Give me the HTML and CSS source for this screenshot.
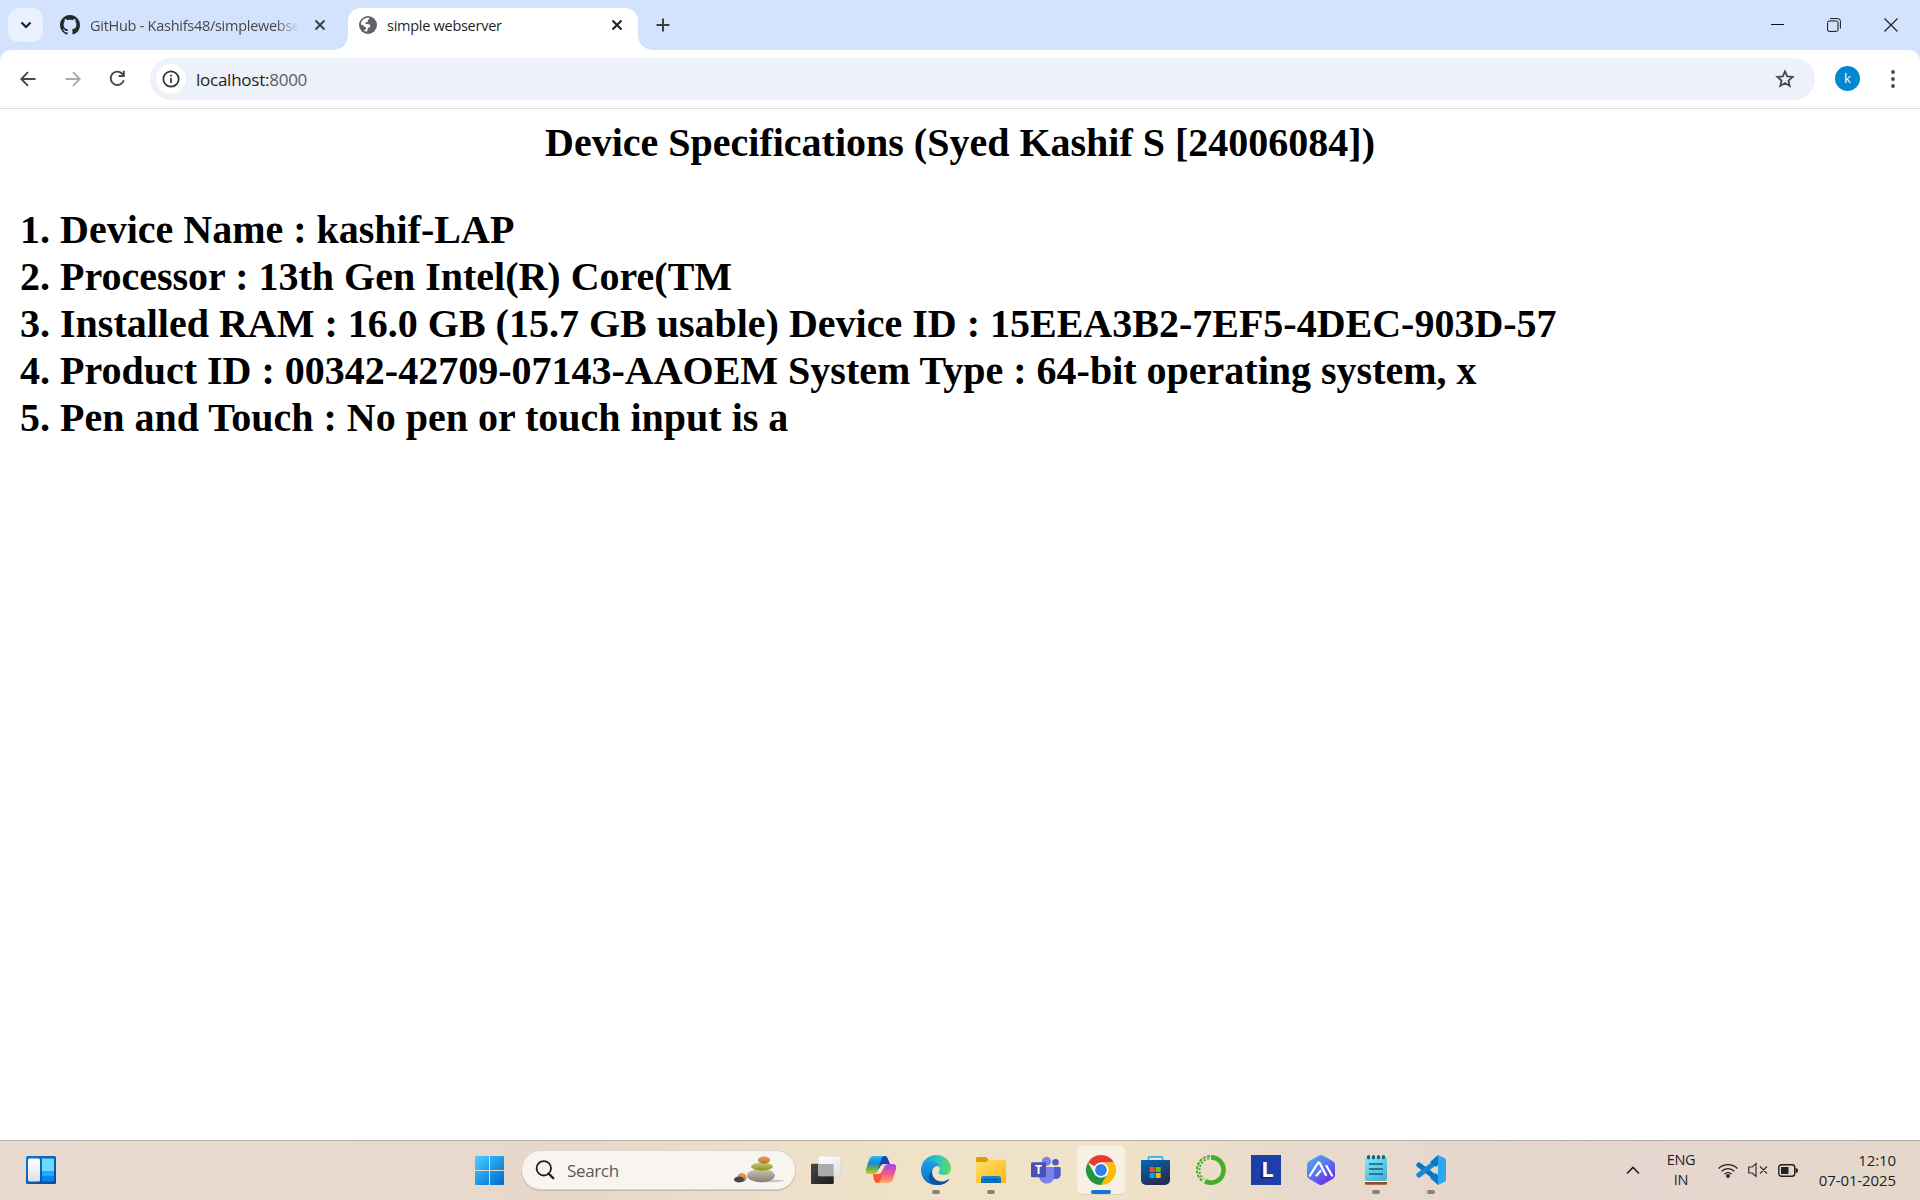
FILE: index.html
```html
<!DOCTYPE html>
<html lang="en">
<head>
<meta charset="utf-8">
<title>simple webserver</title>
<link rel="stylesheet" href="styles.css">
</head>
<body>
<div class="screen">
  <header class="tabstrip">
    <button class="tab-search" aria-label="Search tabs"><svg width="12" height="8" viewBox="0 0 12 8"><path d="M1.5 1.5 6 6l4.500-4.500" fill="none" stroke="#1f1f1f" stroke-width="2.200"/></svg></button>
    <div class="tab">
      <svg class="favicon" width="20" height="20" viewBox="0 0 16 16"><path fill="#24292f" d="M8 0C3.580 0 0 3.580 0 8c0 3.540 2.290 6.530 5.470 7.590.4.070.550-.170.550-.380 0-.190-.010-.820-.010-1.490-2.010.370-2.530-.490-2.690-.940-.090-.230-.480-.940-.820-1.130-.280-.150-.680-.520-.010-.530.630-.010 1.080.580 1.230.820.720 1.210 1.870.870 2.330.660.070-.520.280-.870.510-1.070-1.780-.2-3.640-.890-3.640-3.950 0-.870.310-1.590.820-2.150-.080-.2-.360-1.020.080-2.120 0 0 .670-.210 2.200.820.640-.180 1.320-.270 2-.270s1.360.090 2 .270c1.530-1.040 2.200-.820 2.200-.820.440 1.100.160 1.920.080 2.120.510.560.820 1.270.820 2.150 0 3.070-1.870 3.750-3.650 3.950.290.250.540.730.540 1.480 0 1.070-.010 1.930-.010 2.200 0 .210.150.460.550.380A8.010 8.010 0 0 0 16 8c0-4.420-3.580-8-8-8z"/></svg>
      <span class="tab-title fade">GitHub - Kashifs48/simplewebse</span>
      <svg class="close" width="12" height="12" viewBox="0 0 12 12"><path d="m1.500 1.500 9 9m0-9-9 9" stroke="#3c4043" stroke-width="1.900"/></svg>
    </div>
    <div class="tab active">
      <svg class="favicon" width="18" height="18" viewBox="0 0 18 18"><circle cx="9" cy="9" r="9" fill="#5f6368"/><path fill="#fff" d="M1.900 8.400C2 5 4.700 2.100 8.300 1.800h1.900c.5 1.500-.8 1.700-1.300 2.300-.4.600.2 1.400-.4 1.900-.6.500-1.600 0-2.100.6-.4.600.1 1.300.8 1.400 1.300.2 3.400-.2 4 1.200.6 1.500-.8 2.100-1.900 2.600-1 .6-.2 2.300-1.400 3.600-1 .2-2.300-.2-3.200-.9.900-.8 2.400-.7 2.400-2 0-1.700-1.400-1.500-2.300-2.400C3.900 9.200 3.300 8.500 1.900 8.400z"/></svg>
      <span class="tab-title">simple webserver</span>
      <svg class="close" width="12" height="12" viewBox="0 0 12 12"><path d="m1.500 1.500 9 9m0-9-9 9" stroke="#1f1f1f" stroke-width="2"/></svg>
    </div>
    <svg class="newtab" width="14" height="14" viewBox="0 0 14 14"><path d="M7 .5v13M.5 7h13" stroke="#3c4043" stroke-width="2"/></svg>
    <div class="window-controls">
      <svg width="13" height="13" viewBox="0 0 13 13"><path d="M0 6.500h13" stroke="#111" stroke-width="1"/></svg>
      <svg width="14" height="14" viewBox="0 0 14 14" fill="none" stroke="#111"><rect x=".6" y="3" width="10.400" height="10.400" rx="1.500"/><path d="M3.200.6h7.500a2.700 2.700 0 0 1 2.700 2.700v7.200"/></svg>
      <svg width="14" height="14" viewBox="0 0 14 14"><path d="m.5.5 13 13m0-13-13 13" stroke="#222" stroke-width="1.200"/></svg>
    </div>
  </header>

  <div class="toolbar-bg">
  <nav class="toolbar">
    <svg class="nav-back" width="16" height="16" viewBox="0 0 16 16" fill="none" stroke="#474747" stroke-width="1.900"><path d="M15.500 8H2M8 1.200 1.300 8 8 14.800"/></svg>
    <svg class="nav-forward" width="16" height="16" viewBox="0 0 16 16" fill="none" stroke="#ababab" stroke-width="1.900"><path d="M.5 8H14M8 1.200 14.700 8 8 14.800"/></svg>
    <svg class="nav-reload" width="17" height="17" viewBox="0 0 17 17"><path d="M14.800 10.200A6.700 6.700 0 1 1 13 3.500l1.600 1.700" fill="none" stroke="#474747" stroke-width="1.900"/><path d="M15.800.8v6.100H9.700V5h4.200V.8z" fill="#474747"/></svg>
    <div class="omnibox">
      <span class="site-info"><svg width="18" height="18" viewBox="0 0 18 18"><circle cx="9" cy="9" r="7.700" fill="none" stroke="#303030" stroke-width="1.700"/><path d="M9 8v5M9 4.800v1.700" stroke="#303030" stroke-width="1.700"/></svg></span>
      <span class="url">localhost:<span class="port">8000</span></span>
      <svg class="star" width="20" height="20" viewBox="0 0 20 20"><path d="m10 2.400 2.200 5 5.400.5-4.100 3.600 1.200 5.400L10 14l-4.700 2.900 1.200-5.400-4.100-3.600 5.400-.5z" fill="none" stroke="#474747" stroke-width="1.800"/></svg>
    </div>
    <span class="avatar">k</span>
    <svg class="menu" width="4" height="18" viewBox="0 0 4 18" fill="#474747"><circle cx="2" cy="2" r="1.900"/><circle cx="2" cy="9" r="1.900"/><circle cx="2" cy="16" r="1.900"/></svg>
  </nav>
  </div>

  <main class="page">
    <h1 class="heading">Device Specifications (Syed Kashif S [24006084])</h1>
    <div class="specs">
      <div>1. Device Name : kashif-LAP</div>
      <div>2. Processor : 13th Gen Intel(R) Core(TM</div>
      <div>3. Installed RAM : 16.0 GB (15.7 GB usable) Device ID : 15EEA3B2-7EF5-4DEC-903D-57</div>
      <div>4. Product ID : 00342-42709-07143-AAOEM System Type : 64-bit operating system, x</div>
      <div>5. Pen and Touch : No pen or touch input is a</div>
    </div>
  </main>

  <footer class="taskbar">
    <svg class="widgets" width="30" height="28" viewBox="0 0 30 28"><defs><linearGradient id="wd" x2="1" y2="1"><stop stop-color="#0f77d0"/><stop offset="1" stop-color="#064a96"/></linearGradient><linearGradient id="wp" x2="0" y2="1"><stop stop-color="#fff"/><stop offset="1" stop-color="#dfe0e3"/></linearGradient></defs><rect width="30" height="28" rx="1.500" fill="url(#wd)"/><rect x="2" y="2.500" width="12" height="23" rx="1.500" fill="url(#wp)"/><path fill="#69daff" d="M16 2.500h12V15H16z"/><path fill="#21a8ff" d="M16 15h12v5H16z"/><path fill="#0684ef" d="M16 20h12v5.500H16z"/></svg>

    <div class="apps">
      <svg class="start" width="48" height="48" viewBox="0 0 48 48"><defs><linearGradient id="st" gradientUnits="userSpaceOnUse" x1="10" y1="10" x2="39" y2="39"><stop stop-color="#4fd0ff"/><stop offset=".5" stop-color="#1b9be8"/><stop offset="1" stop-color="#0269d0"/></linearGradient></defs><path fill="url(#st)" d="M11 10h13v14H10V11a1 1 0 0 1 1-1zM25 10h13a1 1 0 0 1 1 1v13H25zM10 25h14v14H11a1 1 0 0 1-1-1zM25 25h14v13a1 1 0 0 1-1 1H25z"/></svg>
      <div class="search">
        <svg width="20" height="20" viewBox="0 0 20 20"><circle cx="8.800" cy="8.300" r="7.200" fill="none" stroke="#222" stroke-width="1.800"/><path d="m13.500 13.500 4.700 4.700" stroke="#222" stroke-width="2.400" stroke-linecap="round"/></svg>
        <span class="search-label">Search</span>
        <svg class="stones" width="52" height="30" viewBox="0 0 52 30"><defs><linearGradient id="s1" x2="0" y2="1"><stop stop-color="#cfc8bb"/><stop offset="1" stop-color="#857d72"/></linearGradient><linearGradient id="s2" x2="0" y2="1"><stop stop-color="#c4cc87"/><stop offset="1" stop-color="#8b9900"/></linearGradient><linearGradient id="s3" x2="0" y2="1"><stop stop-color="#e8a45a"/><stop offset="1" stop-color="#bd7024"/></linearGradient></defs><path d="M28 27q14-4 23-1-10 2-23 1z" fill="#cfc4bb"/><ellipse cx="27" cy="20.500" rx="14" ry="6.800" fill="url(#s1)"/><ellipse cx="28" cy="11.500" rx="11" ry="4" fill="url(#s2)"/><ellipse cx="30" cy="5" rx="6" ry="3.700" fill="url(#s3)"/><ellipse cx="8" cy="22.500" rx="4.500" ry="4.500" fill="url(#s3)"/><ellipse cx="5" cy="24.500" rx="5" ry="3" fill="#41454d"/></svg>
      </div>
      <div class="app"><svg width="48" height="48" viewBox="0 0 48 48"><defs><linearGradient id="tv" x2="1" y2="1"><stop stop-color="#474747"/><stop offset="1" stop-color="#1b1b1b"/></linearGradient><linearGradient id="tw" x2="1" y2="1"><stop stop-color="#fff"/><stop offset="1" stop-color="#e0e0e0"/></linearGradient></defs><rect x="9" y="17.700" width="22.700" height="20.300" rx="1" fill="url(#tv)"/><rect x="16.500" y="10" width="22.200" height="20" rx="1" fill="url(#tw)" stroke="#d5d0c8" stroke-width=".5"/><path fill="#ababab" d="M16.500 18h15.200v12H17.500a1 1 0 0 1-1-1z"/></svg></div>
      <div class="app"><svg width="48" height="48" viewBox="0 0 48 48"><defs><linearGradient id="c1" x2="0" y2="1"><stop stop-color="#22c0f2"/><stop offset=".4" stop-color="#1687d9"/><stop offset=".7" stop-color="#63b24b"/><stop offset="1" stop-color="#e2c21c"/></linearGradient><linearGradient id="c2" x2="0" y2="1"><stop stop-color="#a04af0"/><stop offset=".5" stop-color="#f0568d"/><stop offset="1" stop-color="#ffb06c"/></linearGradient></defs><path fill="#1741bb" d="M20 10h8q2 0 3 3l2 5h-6q-3 0-4 3l-4 6z"/><path fill="#f45a33" d="M28 37h-8q-2 0-3-3l-1-6h5q3 0 4-3l4-7z"/><path fill="url(#c1)" d="M17 10h11q-3 0-4 4l-3 10q-1 4-5 4h-4q-4 0-3-5l3-9q1-4 5-4z"/><path fill="url(#c2)" d="M31 37H20q3 0 4-4l3-11q1-4 5-4h4q4 0 3 5l-3 10q-1 4-5 4z"/></svg></div>
      <div class="app running"><svg width="48" height="48" viewBox="0 0 48 48"><defs><linearGradient id="e1"><stop stop-color="#2097e8"/><stop offset=".55" stop-color="#2bc3ca"/><stop offset="1" stop-color="#63df4e"/></linearGradient><linearGradient id="e2" x2="0" y2="1"><stop stop-color="#21a0df"/><stop offset="1" stop-color="#0868ce"/></linearGradient></defs><path fill="url(#e1)" d="M9.200 22C10.200 14.500 16.500 9 24 9c8.500 0 15 6.200 15 13.500 0 4-3 6.500-7 6.500-3.500 0-5.500-1.200-5.500-2.300 0-1 1.300-1.400 1.300-4 0-4-4-7-9.500-7-4.500 0-8 3-9.100 6.300z"/><path fill="url(#e2)" d="M9 24c0-5 3.800-9 9.500-9 5.200 0 9.300 3.300 9.300 7.700 0-2-1.800-3.200-3.300-2.700-4.500 1.200-5.500 7-3 11.300C24 36 29 38 28 38.500 26.500 39 25.500 39 24 39 15.500 39 9 32.500 9 24z"/><path fill="#0c529d" d="M20 25c-1 7 5.500 11.500 12 10.200 2-.4 3.500-1.500 4.500-2 .5-.2 1 .3.600.9C34.500 37.500 29.500 39.500 25 39c-8-1-11-9-5-14z"/></svg></div>
      <div class="app running"><svg width="48" height="48" viewBox="0 0 48 48"><defs><linearGradient id="f1" x2="1" y2="1"><stop stop-color="#ffdf6e"/><stop offset="1" stop-color="#fdb813"/></linearGradient><linearGradient id="f2" x2="0" y2="1"><stop stop-color="#168bd9"/><stop offset="1" stop-color="#0869b8"/></linearGradient></defs><path fill="#dc9c08" d="M10.500 11H19l3 3h8v6H9v-7.500q0-1.500 1.500-1.500z"/><path fill="url(#f1)" d="M9 16h10l3-2.300h15.500A1.500 1.500 0 0 1 39 15.200V37H10a1 1 0 0 1-1-1z"/><path fill="url(#f2)" d="M14 37v-4.500a2.500 2.500 0 0 1 2.500-2.500h15a2.500 2.500 0 0 1 2.500 2.500V37z"/><path stroke="#084b86" stroke-width="1.200" d="M17.500 33.500h13"/></svg></div>
      <div class="app"><svg width="48" height="48" viewBox="0 0 48 48"><circle cx="24.500" cy="15.300" r="4.600" fill="#7b83eb"/><circle cx="33.500" cy="16.300" r="3.300" fill="#5059c9"/><path fill="#5059c9" d="M29 21h8.500q1.200 0 1.200 1.200V28c0 4-3 5.500-6 5H29z"/><path fill="#7b83eb" d="M17 21h14q1.200 0 1.200 1.200V30c0 5-3.500 7.600-7.600 7.600S17 34 17 30z"/><rect x="9" y="16.300" width="15" height="15" rx="1.200" fill="#4650b5"/><text class="teams-letter" x="16.500" y="28" text-anchor="middle">T</text></svg></div>
      <div class="app current"><svg width="48" height="48" viewBox="0 0 48 48"><path fill="#e33b2e" d="M24 24 11 16.500A15 15 0 0 1 37 16.500H24z"/><path fill="#fbbc04" d="M24 24V16.500h13A15 15 0 0 1 24 39l6.500-11.200z"/><path fill="#24953f" d="M11 16.500 17.500 27.700A7.500 7.500 0 0 0 30.500 27.700L24 39A15 15 0 0 1 11 16.500z"/><circle cx="24" cy="24" r="7.500" fill="#fff"/><circle cx="24" cy="24" r="5.900" fill="#3180f0"/></svg></div>
      <div class="app"><svg width="48" height="48" viewBox="0 0 48 48"><defs><linearGradient id="ms" x2=".5" y2="1"><stop stop-color="#0668b6"/><stop offset="1" stop-color="#242e54"/></linearGradient></defs><path d="M16.500 15v-3.200q0-1 1-1h12q1 0 1 1V15" fill="none" stroke="#25b7ed" stroke-width="1.700"/><path fill="url(#ms)" d="M9.500 14h28q.5 0 .5.500V34a5 5 0 0 1-5 5H14a5 5 0 0 1-5-5V14.500q0-.5.500-.5z"/><path fill="#f25022" d="M17.700 21h5v5h-5z"/><path fill="#7fba00" d="M23.700 21h5v5h-5z"/><path fill="#00a4ef" d="M17.700 27h5v5h-5z"/><path fill="#ffb900" d="M23.700 27h5v5h-5z"/></svg></div>
      <div class="app"><svg width="48" height="48" viewBox="0 0 48 48" fill="none" stroke="#43b02a"><path stroke-width="4.600" d="M24 11.400a12.600 12.600 0 1 1-6 23.700"/><path stroke-width="2" stroke-dasharray="3 1.300" d="M23 10A14 14 0 0 0 16 35.500"/><path stroke-width="2" stroke-dasharray="2 1.600" d="M22 12.300A12 12 0 0 0 16.500 33"/></svg></div>
      <div class="app"><svg width="48" height="48" viewBox="0 0 48 48"><path fill="#1c3faa" d="M9 9h30v30H9z"/><path fill="#17256c" d="m20 15-2 16 2 2 11-1v-2H21z"/><text class="l-letter" x="25.500" y="31" text-anchor="middle">L</text></svg></div>
      <div class="app"><svg width="48" height="48" viewBox="0 0 48 48"><defs><linearGradient id="ai" x2=".8" y2="1"><stop stop-color="#4fb3f5"/><stop offset=".5" stop-color="#5678ed"/><stop offset="1" stop-color="#6b27ed"/></linearGradient></defs><path fill="url(#ai)" d="M22 9.600q2-1.200 4 0l10 5.600q2 1.200 2 3.500v10.600q0 2.300-2 3.500l-10 5.600q-2 1.200-4 0l-10-5.600q-2-1.200-2-3.500V18.700q0-2.300 2-3.500z"/><path d="m13 29.500 7.500-12q1.200-2 2.400 0l6 11.500M19.500 29.500l4-4.500M29.500 20l5.500 9.500" fill="none" stroke="#fff" stroke-width="2.300" stroke-linecap="round" stroke-linejoin="round"/></svg></div>
      <div class="app running"><svg width="48" height="48" viewBox="0 0 48 48"><defs><linearGradient id="np" x2=".7" y2="1"><stop stop-color="#8be8f5"/><stop offset="1" stop-color="#45b4d8"/></linearGradient></defs><path fill="#fff" d="M13 33h22v3H13z"/><path fill="#9a4c18" d="M13 36h22v1.500q0 1.300-1.300 1.300H14.300q-1.300 0-1.300-1.300z"/><rect x="13" y="11" width="22" height="24" rx="1.500" fill="url(#np)"/><path d="M17 18h14M17 23h14M17 28h14" stroke="#096381" stroke-width="1.700"/><path d="M16.500 10.500v1.200M21.500 10.500v1.200M26.500 10.500v1.200M31.500 10.500v1.200" stroke="#096381" stroke-width="3" stroke-linecap="round"/></svg></div>
      <div class="app running"><svg width="48" height="48" viewBox="0 0 48 48"><path d="m12 19 19 14.500" stroke="#0a73bd" stroke-width="5.200" stroke-linecap="round"/><path d="m12 29 19-14.500" stroke="#1389d4" stroke-width="5.200" stroke-linecap="round"/><path fill="#087bc8" d="m31 9 2 8-4 4-6-5zM23 32l6-5 4 4-2 8z"/><path fill="#2ba8f4" d="m31 9 6.500 3q1.500.7 1.500 2.300v19.400q0 1.600-1.500 2.300L31 39V9z"/></svg></div>
    </div>

    <div class="tray">
      <svg class="chevron" width="14" height="9" viewBox="0 0 14 9"><path d="m1 7.500 6-6 6 6" fill="none" stroke="#222" stroke-width="1.700"/></svg>
      <div class="lang"><span>ENG</span><span>IN</span></div>
      <div class="status">
      <svg width="20" height="15" viewBox="0 0 20 15" fill="none" stroke="#222" stroke-width="1.300"><path d="M.6 5.500a13.200 13.200 0 0 1 18.800 0M3.500 8.400a9.200 9.200 0 0 1 13 0M6.400 11.200a5.100 5.100 0 0 1 7.200 0"/><circle cx="10" cy="13" r="1.900" fill="#222" stroke="none"/></svg>
      <svg width="20" height="16" viewBox="0 0 20 16" fill="none" stroke="#333" stroke-width="1.200"><path d="M.7 5v6h3.500L8 14.500v-13L4.200 5zM12 4.500l7 7m0-7-7 7"/></svg>
      <svg width="20" height="13" viewBox="0 0 20 13"><rect x=".8" y=".8" width="15.900" height="11.400" rx="2.500" fill="none" stroke="#222" stroke-width="1.400"/><path fill="#222" d="M3 3h7.500v7H3zM17.500 4q2.500 0 2.500 2.500T17.500 9z"/></svg>
      </div>
      <div class="clock"><span>12:10</span><span>07-01-2025</span></div>
    </div>
  </footer>
</div>
</body>
</html>
```
FILE: styles.css
```css
* { box-sizing: border-box; }
body { margin: 0; font-family: "Open Sans", "Noto Sans", sans-serif; color: #1f1f1f; }
svg { display: block; flex: none; }
.screen { width: 1920px; height: 1200px; display: grid; grid-template-rows: 50px 59px 1fr 60px; overflow: hidden; background: #fff; }

/* Tab strip */
.tabstrip { display: flex; background: #d3e3fd; padding: 8px 18px 0 8px; }
.tab-search { width: 35px; height: 34px; border: 0; padding: 0; border-radius: 11px; background: #e9f1fe; display: grid; place-items: center; }
.tab { display: flex; align-items: center; width: 290px; height: 42px; padding: 0 14px 9px 17px; color: #474747; font-size: 14.500px; }
.tab-title { flex: 1; min-width: 0; white-space: nowrap; line-height: 24px; padding-top: 2px; margin-left: 10px; letter-spacing: -.27px; }
.fade { margin-right: 16px; -webkit-mask-image: linear-gradient(90deg, #000 185px, transparent 209px); mask-image: linear-gradient(90deg, #000 185px, transparent 209px); }
.tab:not(.active) { width: 305px; padding-right: 22px; }
.tab.active { width: 290px; position: relative; background: #fff; color: #1f1f1f; border-radius: 13px 13px 0 0; padding-left: 11px; padding-right: 15px; }
.tab.active::before, .tab.active::after { content: ""; position: absolute; bottom: 0; width: 14px; height: 14px; }
.tab.active::before { right: 100%; background: radial-gradient(circle at 0 0, transparent 13.500px, #fff 14px); }
.tab.active::after { left: 100%; background: radial-gradient(circle at 100% 0, transparent 13.500px, #fff 14px); }
.newtab { margin: 10px 0 0 18px; }
.window-controls { display: flex; align-items: center; height: 33px; gap: 43px; margin-left: auto; padding-right: 4px; }

/* Toolbar */
.toolbar-bg { background: #d3e3fd; }
.toolbar { display: flex; align-items: center; height: 59px; padding: 0 25px 1px 20px; background: #fff; border-radius: 11px 11px 0 0; border-bottom: 1px solid #dedfe1; }
.nav-forward { margin-left: 29px; }
.nav-reload { margin-left: 28px; }
.omnibox { flex: 1; display: flex; align-items: center; height: 42px; margin-left: 24px; padding: 0 20px 0 6px; border-radius: 21px; background: #ecf1fa; }
.site-info { width: 30px; height: 30px; border-radius: 50%; background: #fff; display: grid; place-items: center; }
.url { margin-left: 10px; padding-top: 1px; font-size: 17px; letter-spacing: -.25px; }
.port { color: #5a5e66; }
.star { margin-left: auto; }
.avatar { width: 25px; height: 25px; margin-left: 20px; border-radius: 50%; background: #0288d1; color: #fff; font-size: 13px; line-height: 24px; text-align: center; }
.menu { margin-left: 31px; }

/* Served page */
.page { padding: 10px 20px; font-family: "Liberation Serif", "Times New Roman", serif; font-weight: 700; font-size: 40px; line-height: 47px; color: #000; }
.heading { margin: 0 0 40px; font-size: 40px; line-height: 47px; text-align: center; }
.specs { white-space: nowrap; }

/* Taskbar */
.taskbar { display: flex; align-items: center; border-top: 1px solid #b9ada3; padding: 0 25px 1px 26px; background: linear-gradient(90deg, #e7d9cd 0, #e8d8cc 600px, #eddfc9 780px, #f0e2c8 900px, #f0e2c8 1120px, #e8dacc 1300px, #e6d7ce 1500px, #e7d6cf 1650px, #e4d8ca 1920px); }
.apps { display: flex; align-items: center; gap: 7px; margin-left: 409px; }
.search { display: flex; align-items: center; width: 273px; height: 38px; margin-left: 2px; padding: 0 9px 0 13px; border-radius: 19px; background: #f8f4ef; box-shadow: 0 0 0 1px #e1d4c8, 0 1px 0 1px #c5b8ad; }
.search-label { margin-left: 12px; font-size: 17px; color: #5c5956; letter-spacing: -.35px; }
.stones { margin-left: auto; }
.app { position: relative; width: 48px; height: 48px; border-radius: 5px; }
.running::after, .current::after { content: ""; position: absolute; left: 20px; bottom: 0; width: 8px; height: 4px; border-radius: 2px; background: #8b8277; }
.current { background: #f8f0e4; box-shadow: 0 1px 0 #e0d1bb; }
.current::after { left: 14px; width: 20px; background: #0e78d4; }
.teams-letter { font: 700 12px "Open Sans", sans-serif; fill: #fff; }
.l-letter { font: 700 22px "Open Sans", sans-serif; fill: #fff; }
.tray { display: flex; align-items: center; margin-left: auto; font-size: 14.500px; line-height: 20px; letter-spacing: -.3px; }
.lang, .clock { display: flex; flex-direction: column; }
.lang { align-items: center; width: 40px; margin-left: 21px; }
.status { display: flex; align-items: center; gap: 10px; margin-left: 17px; }
.clock { align-items: flex-end; width: 98px; margin-right: -1px; font-size: 15px; letter-spacing: -.1px; }
```
